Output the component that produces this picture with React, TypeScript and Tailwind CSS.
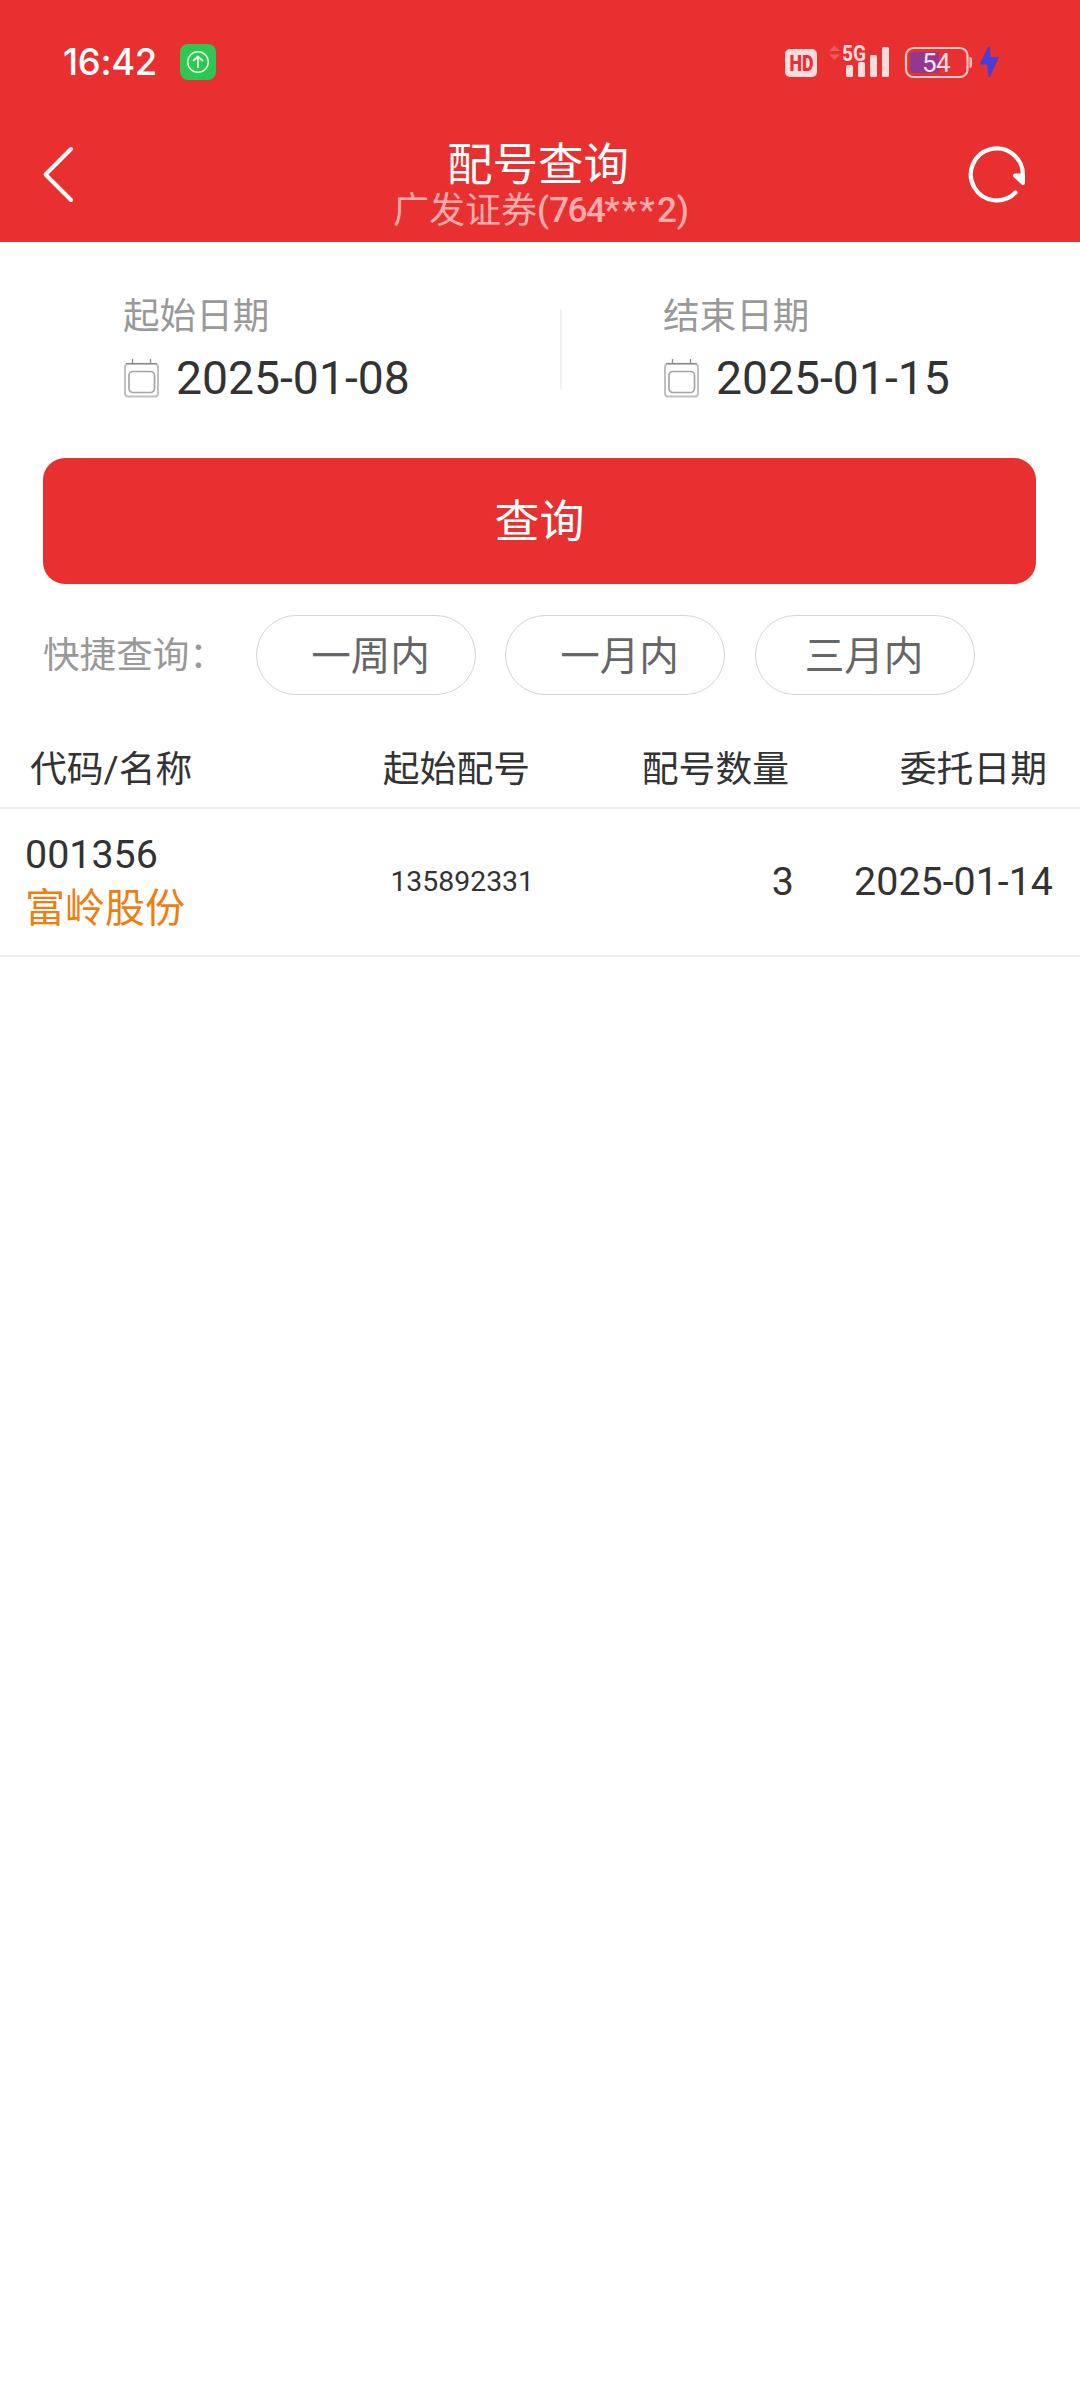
const RANGES = [
  { label: '一周内', pad: 'pl-[9px]' },
  { label: '一月内', pad: 'pl-[9px]' },
  { label: '三月内', pad: 'ml-px pr-[2px]' },
];

const DATES = [
  { label: '起始日期', value: '2025-01-08' },
  { label: '结束日期', value: '2025-01-15' },
];

const ROWS = [{ code: '001356', name: '富岭股份', start: '135892331', count: '3', date: '2025-01-14' }];

function StatusIcons() {
  return (
    <svg width="216" height="36" viewBox="785 44 216 36" className="overflow-visible font-['Roboto']">
      <rect x="785" y="49" width="32" height="28" rx="5" fill="#ffdcdc" />
      <text
        x="789.5"
        y="71"
        fontSize="22"
        fontWeight="900"
        fill="#e83030"
        textLength="24"
        lengthAdjust="spacingAndGlyphs"
      >
        HD
      </text>
      <path d="M834.5 45.5l5.5 5.5h-11zM834.5 60l5.5-5.5h-11z" fill="#f25c5c" />
      <text x="842" y="60.5" fontSize="22" fontWeight="700" fill="#ffdcdc" textLength="24" lengthAdjust="spacingAndGlyphs">
        5G
      </text>
      <g fill="#ffdcdc">
        <rect x="846" y="65" width="7" height="12" rx="1.5" />
        <rect x="858" y="62" width="7" height="15" rx="1.5" />
        <rect x="870" y="55" width="7" height="22" rx="1.5" />
        <rect x="882" y="47" width="7" height="30" rx="1.5" />
      </g>
      <path d="M914 52h25v21h-25a4 4 0 0 1-4-4v-13a4 4 0 0 1 4-4z" fill="#90398f" />
      <rect x="906" y="48" width="61.5" height="29" rx="7.5" fill="none" stroke="#ffcaca" strokeWidth="2.2" />
      <path d="M969.5 57q2.5 0 2.5 2v7q0 2-2.5 2z" fill="#ffb9b9" />
      <text x="922" y="71.5" fontSize="26" fill="#ffdff0" textLength="28.5">
        54
      </text>
      <path d="M988 47l-8.5 17.5h7.5l1.5 12.500h1.500l9-20h-8.500l-.5-10z" fill="#4b3dd2" />
    </svg>
  );
}

function CalendarIcon() {
  return (
    <svg width="36" height="40" viewBox="0 0 36 40" fill="none">
      <rect x="1" y="6" width="33" height="32.5" rx="3" stroke="#c0c0c0" strokeWidth="2" />
      <path d="M2 5.5h31" stroke="#8a8a8a" strokeWidth="1.2" />
      <path d="M8.5 1v4.5M26.5 1v4.5" stroke="#8a8a8a" strokeWidth="1.3" />
      <rect x="5" y="13.5" width="25.5" height="21" rx="4" stroke="#a5a5a5" strokeWidth="1.7" />
    </svg>
  );
}

export default function App() {
  return (
    <div className="min-h-[2400px] w-[1080px] bg-white font-['Roboto','Noto_Sans_CJK_SC',sans-serif] leading-none text-[#333]">
      <header className="h-[242px] bg-[#e83030] text-white">
        <div className="flex h-[124px] items-center pl-[63px] pr-[79px]">
          <span className="w-[117px] pt-px font-['Inter'] text-[36.4px] font-medium tracking-[-0.3px]">16:42</span>
          <svg width="36" height="36" viewBox="0 0 36 36" fill="none">
            <rect width="36" height="36" rx="8" fill="#2fc751" />
            <circle cx="18" cy="18" r="10.3" stroke="#e3fbe7" strokeWidth="1.5" />
            <path d="M18 24V12.5M13 17l5-4.5 5 4.5" stroke="#e3fbe7" strokeWidth="1.7" />
          </svg>
          <div className="ml-auto">
            <StatusIcons />
          </div>
        </div>
        <div className="flex h-[118px] items-start justify-between pl-[42px] pr-[53px]">
          <svg width="34" height="60" viewBox="42 144 34 60" fill="none" className="mt-5">
            <path
              d="M71 149L45.5 174.5 71 200"
              stroke="#fff"
              strokeWidth="4"
              strokeLinecap="round"
              strokeLinejoin="round"
            />
          </svg>
          <div className="flex flex-col items-center pt-[19px] pl-[39px]">
            <h1 className="pr-[6px] text-[45.5px] leading-[45px]">配号查询</h1>
            <p className="mt-[5px] flex text-[36px] leading-[36px] text-[#ffabab]">
              广发证券
              <span className="flex text-[35px] font-medium">
                <span>(</span>
                <span className="tracking-[-1.5px]">764</span>
                <span className="tracking-[2px]">***</span>
                <span>2)</span>
              </span>
            </p>
          </div>
          <svg width="60" height="60" viewBox="967 144 60 60" fill="none" className="mt-5">
            <path
              d="M1015.5 192.5A26 26 0 1 1 1022.8 175"
              stroke="#fff"
              strokeWidth="4.2"
              strokeLinecap="round"
            />
            <path d="M1015 175.5h8v7.5z" fill="#fff" stroke="#fff" strokeWidth="4" strokeLinejoin="round" />
          </svg>
        </div>
      </header>

      <section className="flex h-[216px]">
        {DATES.map(({ label, value }, i) => (
          <div key={label} className="flex w-[540px] pt-[56px] pl-[123px]">
            <div>
              <div className="text-[36.6px] leading-[38px] text-[#999]">{label}</div>
              <div className="mt-[18px] flex items-center pl-px">
                <CalendarIcon />
                <span className="ml-4 text-[46.3px] leading-[48px]">{value}</span>
              </div>
            </div>
            {i === 0 && <div className="mt-[11px] -mr-[22px] ml-auto h-[80px] w-[2px] bg-[#f2f2f2]" />}
          </div>
        ))}
      </section>

      <button className="ml-[43px] flex h-[126px] w-[993px] items-center justify-center rounded-[22px] bg-[#e83030] pt-[2px] text-[45px] text-white">
        查询
      </button>

      <div className="mt-[31px] flex h-[80px] items-center pl-[43px]">
        <span className="w-[213px] pt-[2px] text-[36.6px] text-[#999]">快捷查询：</span>
        <div className="flex gap-[29px]">
          {RANGES.map(({ label, pad }) => (
            <button
              key={label}
              className={`flex h-[80px] w-[220px] items-center justify-center rounded-full border border-[#d4d4d4] pt-[4px] text-[39.6px] text-[#666] ${pad}`}
            >
              {label}
            </button>
          ))}
        </div>
      </div>

      <div className="mt-[32px] grid h-[82px] grid-cols-[352px_178px_259px_258px] items-center border-b-2 border-[#eee] pt-[6px] text-[36.8px]">
        <span className="pl-[30px]">代码/名称</span>
        <span className="text-right">起始配号</span>
        <span className="text-right">配号数量</span>
        <span className="text-right">委托日期</span>
      </div>

      {ROWS.map(({ code, name, start, count, date }) => (
        <div
          key={code}
          className="grid h-[148px] grid-cols-[352px_182px_260px_259px] items-center border-b-2 border-[#eee] text-right text-[39.4px]"
        >
          <div className="pl-[25px] text-left">
            <div className="leading-[50px]">{code}</div>
            <div className="pt-[3px] text-[40px] leading-[52px] text-[#ee7d12]">{name}</div>
          </div>
          <span className="text-[28.4px]">{start}</span>
          <span>{count}</span>
          <span>{date}</span>
        </div>
      ))}
    </div>
  );
}
